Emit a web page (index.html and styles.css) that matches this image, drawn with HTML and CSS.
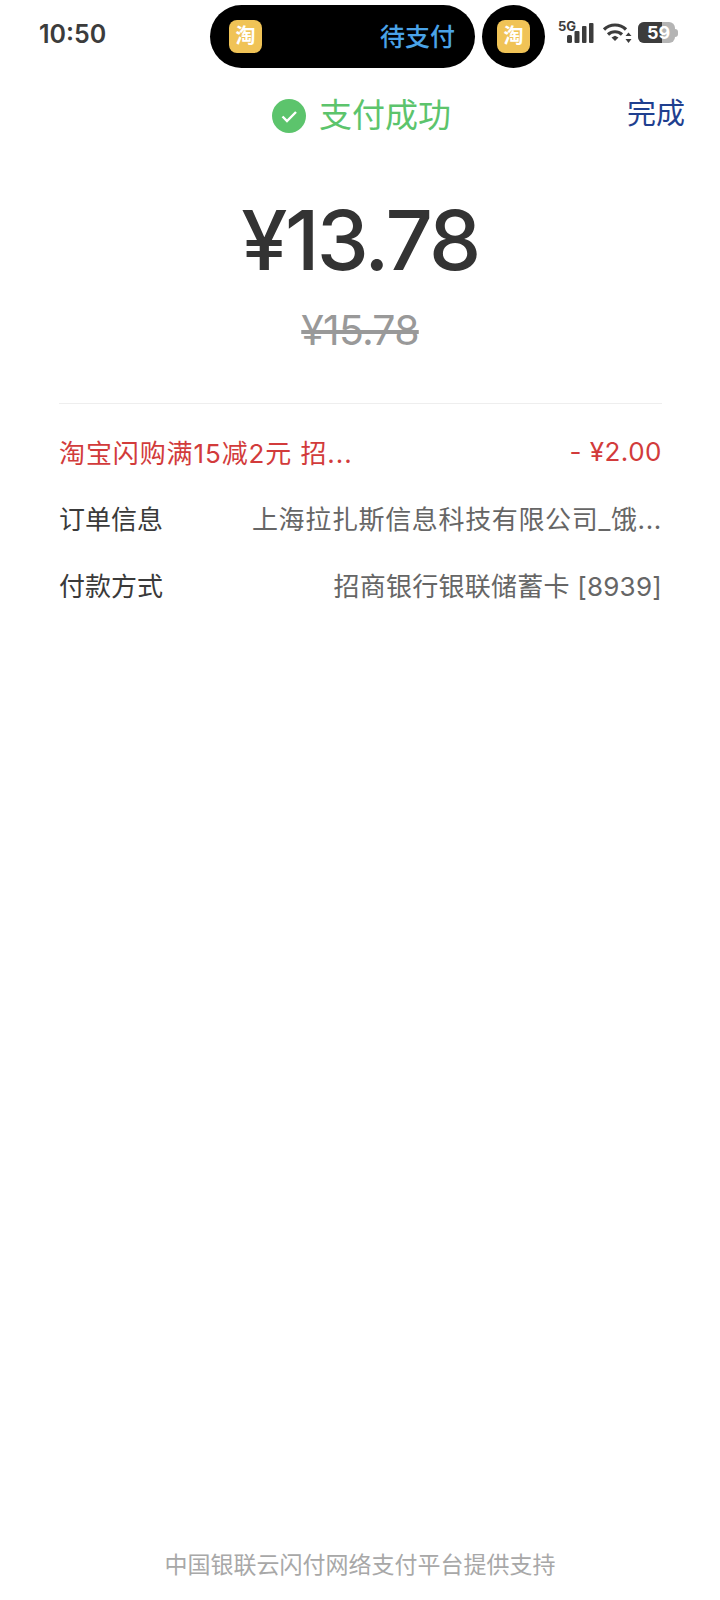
FILE: index.html
```html
<!DOCTYPE html>
<html lang="zh-CN">
<head>
  <meta charset="UTF-8">
  <meta name="viewport" content="width=device-width, initial-scale=1.0">
  <title>支付成功</title>
  <link rel="stylesheet" href="styles.css">
</head>
<body>
  <div class="page">
    <div class="status-bar">
      <span class="time">10:50</span>
      <div class="island">
        <div class="app-icon">淘</div>
        <span class="island-text">待支付</span>
      </div>
      <div class="island-dot">
        <div class="app-icon">淘</div>
      </div>
      <div class="status-icons">
        <span class="net-label">5G</span>
        <svg class="signal" width="27" height="20" viewBox="0 0 27 20">
          <rect x="0" y="12" width="5" height="8" rx="1.5"/>
          <rect x="7.500" y="8" width="5" height="12" rx="1"/>
          <rect x="15" y="3" width="4.500" height="17" rx="1"/>
          <rect x="22" y="0" width="4.500" height="20" rx="1"/>
        </svg>
        <svg class="wifi" width="29" height="20" viewBox="0 0 29 20">
          <path d="M1 6.500C7 0.500 17 0.500 23 6.500" fill="none" stroke="#3c3c3c" stroke-width="3.200"/>
          <path d="M5 11.500C9 7.800 15 7.800 19 11.500" fill="none" stroke="#3c3c3c" stroke-width="3.200"/>
          <path d="M8.500 14.500L12 12.800L15.500 14.500L12 18Z" fill="#3c3c3c"/>
          <path d="M25.500 9.500L28.500 13H22.500Z" fill="#3c3c3c"/>
          <path d="M25.500 20L22.500 16H28.500Z" fill="#3c3c3c"/>
        </svg>
        <div class="battery">
          <div class="battery-level"></div>
          <span class="battery-num">59</span>
        </div>
        <div class="battery-nub"></div>
      </div>
    </div>

    <div class="title-row">
      <div class="title">
        <svg class="title-icon" width="34" height="34" viewBox="0 0 34 34">
          <circle cx="17" cy="17" r="17" fill="#5cc46c"/>
          <path d="M10.500 17.500L15 22L24 13" fill="none" stroke="#fff" stroke-width="2.400"/>
        </svg>
        <span>支付成功</span>
      </div>
      <a class="done">完成</a>
    </div>

    <div class="amount">¥13.78</div>
    <div class="old-amount">¥15.78</div>

    <div class="details">
      <div class="row row-discount">
        <span class="row-left">淘宝闪购满15减2元 招...</span>
        <span class="row-right">- ¥2.00</span>
      </div>
      <div class="row row-order">
        <span class="row-left">订单信息</span>
        <span class="row-right">上海拉扎斯信息科技有限公司_饿...</span>
      </div>
      <div class="row row-pay">
        <span class="row-left">付款方式</span>
        <span class="row-right">招商银行银联储蓄卡 [8939]</span>
      </div>
    </div>

    <div class="footer">中国银联云闪付网络支付平台提供支持</div>
  </div>
</body>
</html>
```

FILE: styles.css
```css
* {
  margin: 0;
  padding: 0;
  box-sizing: border-box;
}

body {
  font-family: Inter, "Noto Sans CJK SC", sans-serif;
  background-color: #ffffff;
}

.page {
  width: 720px;
  height: 1600px;
  display: flex;
  flex-direction: column;
  overflow: hidden;
}

.status-bar {
  height: 69px;
  padding-top: 5px;
  padding-left: 39px;
  display: flex;
  align-items: flex-start;
}

.time {
  width: 171px;
  margin-top: 13px;
  font-size: 25px;
  line-height: 32px;
  font-weight: 600;
  color: #3c3c3c;
}

.island {
  width: 265px;
  height: 63px;
  padding: 0 20px 0 19px;
  background-color: #000;
  border-radius: 32px;
  display: flex;
  align-items: center;
  justify-content: space-between;
}

.island-dot {
  width: 63px;
  height: 63px;
  margin-left: 7px;
  background-color: #000;
  border-radius: 50%;
  display: flex;
  align-items: center;
  justify-content: center;
}

.app-icon {
  width: 33px;
  height: 33px;
  background-color: #f0c356;
  border-radius: 8px;
  color: #fff;
  font-size: 20px;
  font-weight: 700;
  line-height: 33px;
  text-align: center;
}

.island-text {
  margin-top: -4px;
  font-size: 25px;
  font-weight: 500;
  color: #4aa3e8;
}

.status-icons {
  position: relative;
  margin-left: 13px;
  margin-top: 15px;
  display: flex;
  align-items: flex-end;
  height: 23px;
  padding-left: 9px;
  fill: #3c3c3c;
}

.net-label {
  position: absolute;
  left: 0;
  top: -1px;
  font-size: 13px;
  line-height: 14px;
  font-weight: 700;
  color: #3c3c3c;
}

.signal {
  margin-right: 9px;
}

.wifi {
  margin-right: 6px;
}

.battery {
  position: relative;
  width: 37px;
  height: 21px;
  background-color: #b4b4b4;
  border-radius: 6px;
  overflow: hidden;
}

.battery-level {
  width: 65%;
  height: 100%;
  background-color: #3c3c3c;
}

.battery-num {
  position: absolute;
  left: 9px;
  top: 0;
  font-size: 18px;
  line-height: 21px;
  font-weight: 700;
  color: #fff;
}

.battery-nub {
  width: 3px;
  height: 8px;
  margin-bottom: 6px;
  background-color: #b4b4b4;
  border-radius: 0 3px 3px 0;
}

.title-row {
  position: relative;
  height: 60px;
  margin-top: 14px;
  display: flex;
  justify-content: center;
  align-items: center;
}

.title {
  display: flex;
  align-items: center;
  gap: 13px;
  padding-left: 3px;
  font-size: 33px;
  color: #5cc46c;
}

.title-icon {
  margin-top: 5px;
}

.done {
  position: absolute;
  right: 35px;
  top: 7px;
  font-size: 29px;
  color: #1f3f8f;
}

.amount {
  margin-top: 47px;
  text-align: center;
  font-size: 83px;
  line-height: 100px;
  font-weight: 500;
  letter-spacing: -2.600px;
  color: #333333;
}

.old-amount {
  margin-top: 15px;
  text-align: center;
  font-size: 41px;
  line-height: 50px;
  letter-spacing: -0.800px;
  color: #999999;
  text-decoration: line-through;
}

.details {
  margin: 48px 58px 0 59px;
  border-top: 1px solid #eeeeee;
  padding-top: 14px;
}

.row {
  height: 66.500px;
  display: flex;
  justify-content: space-between;
  align-items: center;
  font-size: 26px;
  color: #3a3a3a;
}

.row-right {
  color: #666666;
}

.row-discount .row-left,
.row-discount .row-right {
  color: #d23b3b;
}

.row-discount .row-left {
  letter-spacing: 0.900px;
}

.row-discount .row-right {
  letter-spacing: 0.500px;
}

.row-order .row-right {
  letter-spacing: 0.650px;
}

.row-pay .row-right {
  letter-spacing: 0.240px;
}

.footer {
  margin-top: auto;
  margin-bottom: 20px;
  text-align: center;
  font-size: 23px;
  color: #a8a8a8;
}
```
